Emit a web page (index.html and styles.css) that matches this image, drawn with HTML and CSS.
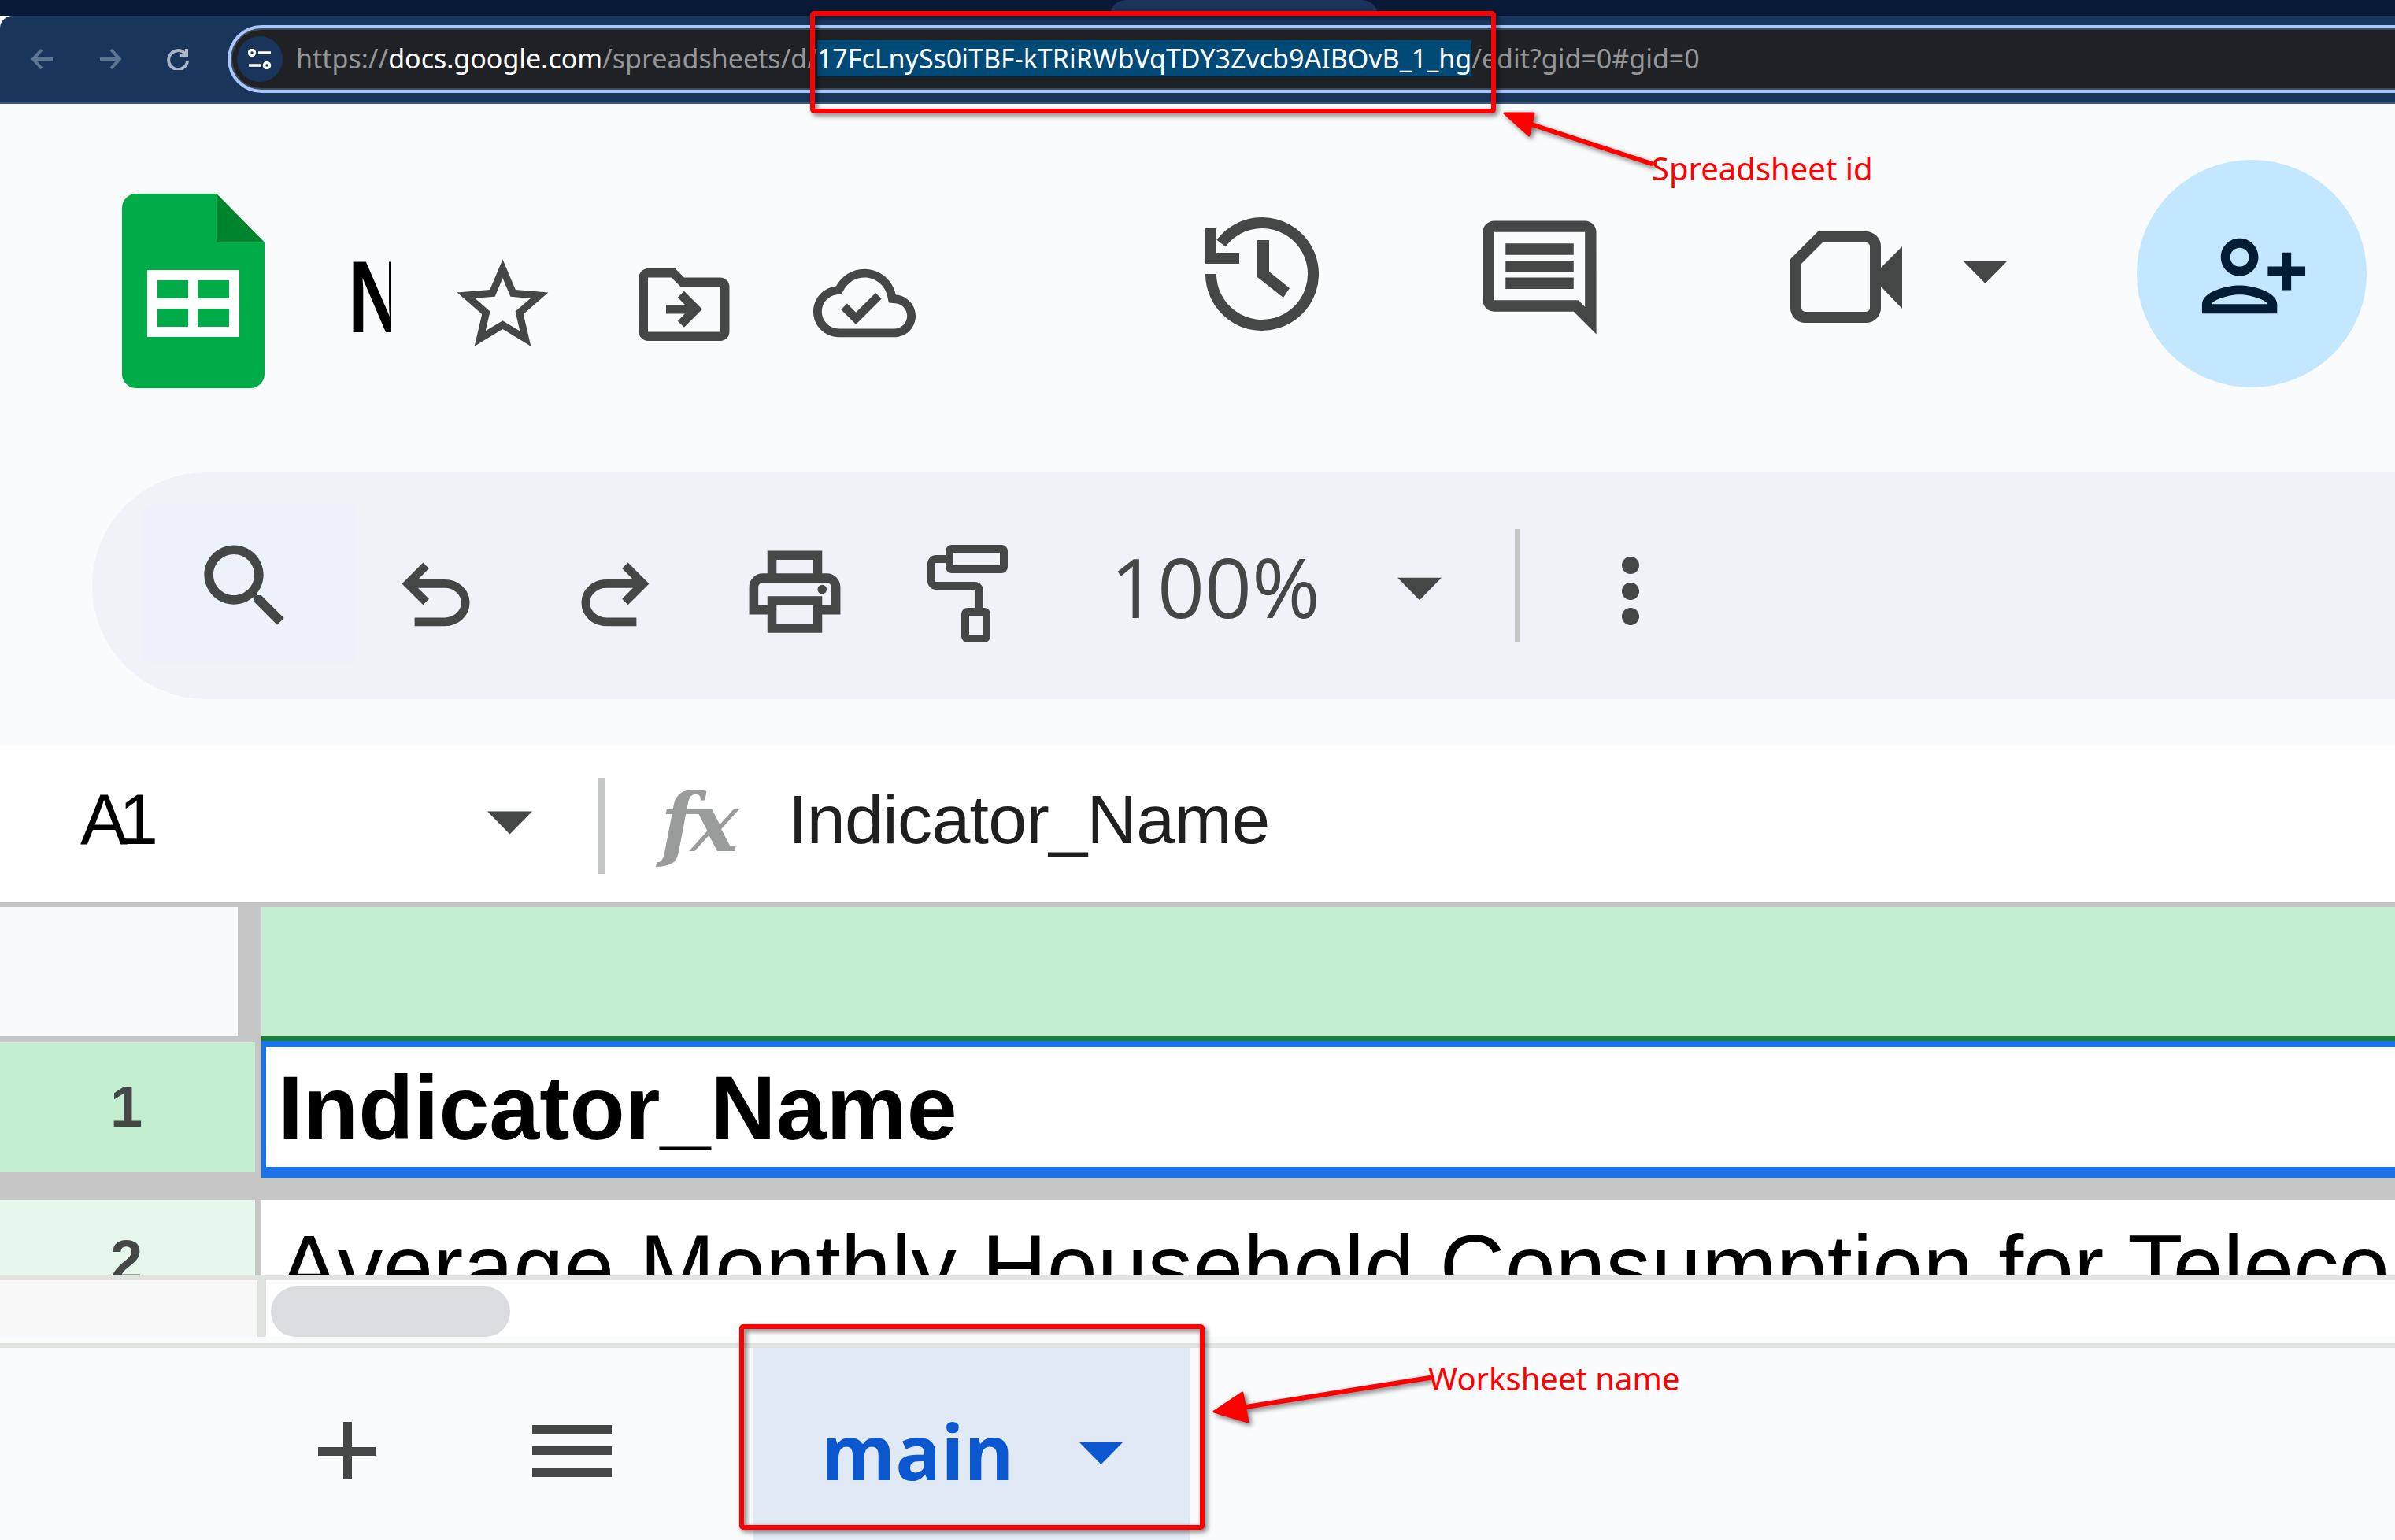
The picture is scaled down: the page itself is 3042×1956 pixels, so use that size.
FILE: index.html
```html
<!DOCTYPE html>
<html>
<head>
    <title>Google Sheets - spreadsheet id and worksheet name</title>
    <link rel="stylesheet" href="styles.css">
</head>
<body>
    <div class="tabstrip">
        <div class="active-tab"></div>
    </div>

    <div class="navbar">
        <svg class="nav-icon back" viewBox="0 0 30 28"><path d="M28 14H4M14 2 3 14l11 12" /></svg>
        <svg class="nav-icon forward" viewBox="0 0 30 28"><path d="M2 14h24M16 2l11 12-11 12" /></svg>
        <svg class="nav-icon reload" viewBox="0 0 32 28"><path d="M27 17a12 12 0 1 1-3-10M26 1v8h-8" /></svg>
        <div class="omnibox">
            <div class="site-info">
                <svg class="tune" viewBox="0 0 30 26"><circle cx="5" cy="5" r="3.5" /><path d="M13 5h16M1 21h16" /><circle cx="24" cy="21" r="3.5" /></svg>
            </div>
            <div class="url"><span class="dim">https://</span><span class="host">docs.google.com</span><span class="dim">/spreadsheets/d/</span><span class="selected">17FcLnySs0iTBF-kTRiRWbVqTDY3Zvcb9AIBOvB_1_hg</span><span class="dim">/edit?gid=0#gid=0</span></div>
            <div class="profile-dot"></div>
        </div>
    </div>

    <div class="doc-header">
        <svg class="logo" viewBox="0 0 181 247">
            <path d="M18 0H120L181 62V229a18 18 0 0 1-18 18H18a18 18 0 0 1-18-18V18A18 18 0 0 1 18 0Z" fill="#00ac47" />
            <path d="M120 0 181 62H120Z" fill="#00832d" />
            <path d="M32 97H149V182H32ZM45 110V133H84V110ZM96 110V133H136V110ZM45 146V169H84V146ZM96 146V169H136V146Z" fill="#fff" fill-rule="evenodd" />
        </svg>
        <div class="doc-title"><span class="doc-title-text">N</span></div>
        <svg class="icon star" viewBox="0 0 24 24"><path d="M22 9.24l-7.19-.62L12 2 9.19 8.63 2 9.24l5.46 4.73L5.82 21 12 17.27 18.18 21l-1.63-7.03L22 9.24zM12 15.4l-3.76 2.27 1-4.28-3.32-2.88 4.38-.38L12 6.1l1.71 4.04 4.38.38-3.32 2.88 1 4.28L12 15.4z" /></svg>
        <svg class="icon folder" viewBox="0 0 24 24"><path d="M20 6h-8l-2-2H4c-1.1 0-1.99.9-1.99 2L2 18c0 1.1.9 2 2 2h16c1.1 0 2-.9 2-2V8c0-1.1-.9-2-2-2zm0 12H4V6h5.17l2 2H20v10zM12.16 12H8v2h4.16l-1.59 1.59L11.99 17 16 13l-4.01-4-1.42 1.41L12.16 12z" /></svg>
        <svg class="icon cloud" viewBox="0 0 24 24"><path d="M19.35 10.04C18.67 6.59 15.64 4 12 4 9.11 4 6.6 5.64 5.35 8.04 2.34 8.36 0 10.91 0 14c0 3.31 2.69 6 6 6h13c2.76 0 5-2.24 5-5 0-2.64-2.05-4.78-4.65-4.96zM19 18H6c-2.21 0-4-1.79-4-4 0-2.05 1.53-3.76 3.56-3.97l1.07-.11.5-.95C8.08 7.14 9.94 6 12 6c2.62 0 4.88 1.86 5.39 4.43l.3 1.5 1.53.11c1.56.1 2.78 1.41 2.78 2.96 0 1.65-1.35 3-3 3zm-9-3.82l-2.09-2.09L6.5 13.5 10 17l6.01-6.01-1.41-1.41z" /></svg>
        <svg class="icon history" viewBox="0 0 144 145">
            <path d="M7 72A65 65 0 1 0 20 33" fill="none" stroke="#444746" stroke-width="14" />
            <path d="M0 14H14V45H43V59H0Z" />
            <path d="M66 29H81V69L107 90 99 102 66 76Z" />
        </svg>
        <svg class="icon comment" viewBox="0 0 24 24"><path d="M21.99 4c0-1.1-.89-2-1.99-2H4c-1.1 0-2 .9-2 2v12c0 1.1.9 2 2 2h14l4 4-.01-18zM20 4v13.17L18.83 16H4V4h16zM6 12h12v2H6zm0-3h12v2H6zm0-3h12v2H6z" /></svg>
        <svg class="icon meet" viewBox="0 0 142 116">
            <path d="M38 7H96A12 12 0 0 1 108 19V97A12 12 0 0 1 96 109H19A12 12 0 0 1 7 97V38Z" fill="none" stroke="#444746" stroke-width="14" />
            <path d="M115 46 142 19V98L115 70Z" />
        </svg>
        <svg class="icon caret meet-caret" viewBox="0 0 55 28"><path d="M0 0H55L27.5 28Z" /></svg>
        <div class="share">
            <svg class="share-icon" viewBox="0 0 24 24"><path d="M15 12c2.21 0 4-1.79 4-4s-1.79-4-4-4-4 1.79-4 4 1.79 4 4 4zm0-6c1.1 0 2 .9 2 2s-.9 2-2 2-2-.9-2-2 .9-2 2-2zm0 8c-2.67 0-8 1.34-8 4v2h16v-2c0-2.66-5.33-4-8-4zm-6 4c.22-.72 3.31-2 6-2 2.7 0 5.8 1.29 6 2H9zm-3-3v-3h3v-2H6V7H4v3H1v2h3v3h2z" /></svg>
        </div>
    </div>

    <div class="toolbar">
        <div class="search-box">
            <svg class="icon search" viewBox="0 0 24 24"><path d="M15.5 14h-.79l-.28-.27C15.41 12.59 16 11.11 16 9.5 16 5.91 13.09 3 9.5 3S3 5.91 3 9.5 5.91 16 9.5 16c1.61 0 3.09-.59 4.23-1.57l.27.28v.79l5 4.99L20.49 19l-4.99-5zm-6 0C7.01 14 5 11.99 5 9.5S7.01 5 9.5 5 14 7.01 14 9.5 11.99 14 9.5 14z" /></svg>
        </div>
        <svg class="icon undo" viewBox="0 -960 960 960"><path d="M280-200v-80h284q63 0 109.5-40T720-420q0-60-46.5-100T564-560H312l104 104-56 56-200-200 200-200 56 56-104 104h252q97 0 166.5 63T800-420q0 94-69.5 157T564-200H280Z" /></svg>
        <svg class="icon redo" viewBox="0 -960 960 960"><path d="M396-200q-97 0-166.5-63T160-420q0-94 69.5-157T396-640h252L544-744l56-56 200 200-200 200-56-56 104-104H396q-63 0-109.5 40T240-420q0 60 46.5 100T396-280h284v80H396Z" /></svg>
        <svg class="icon print" viewBox="0 0 24 24"><path d="M19 8h-1V3H6v5H5c-1.66 0-3 1.34-3 3v6h4v4h12v-4h4v-6c0-1.66-1.34-3-3-3zM8 5h8v3H8V5zm8 12v2H8v-4h8v2zm2-2v-2H6v2H4v-4c0-.55.45-1 1-1h14c.55 0 1 .45 1 1v4h-2z" /><circle cx="18" cy="11.5" r="1" /></svg>
        <svg class="icon roller" viewBox="0 0 102 124">
            <rect x="28" y="5" width="69" height="26" rx="3" fill="none" stroke="#444746" stroke-width="10" />
            <path d="M23 18H11A6 6 0 0 0 5 24V46A6 6 0 0 0 11 52H60A6 6 0 0 1 66 58V80" fill="none" stroke="#444746" stroke-width="10" />
            <rect x="48" y="85" width="27" height="34" rx="3" fill="none" stroke="#444746" stroke-width="10" />
        </svg>
        <div class="zoom-level">100%</div>
        <svg class="icon caret zoom-caret" viewBox="0 0 55 28"><path d="M0 0H55L27.5 28Z" /></svg>
        <div class="divider tool-divider"></div>
        <svg class="icon dots" viewBox="0 0 22 87"><circle cx="11" cy="11" r="11" /><circle cx="11" cy="44" r="11" /><circle cx="11" cy="76" r="11" /></svg>
    </div>

    <div class="formula-bar">
        <div class="name-box">A1</div>
        <svg class="icon caret name-caret" viewBox="0 0 55 28"><path d="M0 0H55L27.5 28Z" /></svg>
        <div class="divider formula-divider"></div>
        <div class="fx">fx</div>
        <div class="formula-text">Indicator_Name</div>
    </div>

    <div class="grid">
        <div class="grid-row header-row">
            <div class="corner"></div>
            <div class="col-head"></div>
        </div>
        <div class="grid-row row-one">
            <div class="row-head active">1</div>
            <div class="cell selected-cell">Indicator_Name</div>
        </div>
        <div class="grid-row row-two">
            <div class="row-head">2</div>
            <div class="cell">Average Monthly Household Consumption for Telecommunications</div>
        </div>
    </div>

    <div class="scroll-row">
        <div class="scroll-side"></div>
        <div class="scroll-track">
            <div class="scroll-thumb"></div>
        </div>
    </div>

    <div class="sheet-bar">
        <svg class="bar-icon add" viewBox="0 0 73 73"><path d="M32 0H43V32H73V43H43V73H32V43H0V32H32Z" /></svg>
        <svg class="bar-icon all-sheets" viewBox="0 0 101 66"><path d="M0 0H101V12H0ZM0 27H101V38H0ZM0 54H101V66H0Z" /></svg>
        <div class="sheet-tab">
            <span class="sheet-name">main</span>
            <svg class="tab-caret" viewBox="0 0 55 28"><path d="M0 0H55L27.5 28Z" /></svg>
        </div>
    </div>

    <!-- annotations drawn on top of the screenshot -->
    <svg class="marks" viewBox="0 0 3042 1956">
        <rect x="1032" y="17" width="865" height="124" rx="2" />
        <path class="line" d="M2098 208 1930 153" />
        <path class="head" d="M1911 144 1948 144 1942 172Z" />
        <rect x="942" y="1685" width="585" height="255" rx="2" />
        <path class="line" d="M1816 1750 1570 1789" />
        <path class="head" d="M1542 1793 1578 1769 1585 1806Z" />
    </svg>
    <div class="note note-id">Spreadsheet id</div>
    <div class="note note-sheet">Worksheet name</div>
</body>
</html>
```

FILE: styles.css
```css
body {
    margin: 0;
    width: 3042px;
    height: 1956px;
    overflow: hidden;
    position: relative;
    background-color: #f9fbfd;
    font-family: 'Liberation Sans', Arial, sans-serif;
}

svg {
    display: block;
    flex: none;
}

/* browser chrome */
.tabstrip {
    height: 20px;
    background-color: #081a35;
    display: flex;
}

.active-tab {
    width: 340px;
    margin-left: 1410px;
    background-color: #1a355c;
    border-radius: 24px 24px 0 0;
}

.navbar {
    height: 110px;
    background-color: #1a355c;
    border-bottom: 2px solid #3d5576;
    border-top-left-radius: 16px;
    display: flex;
    align-items: center;
}

.nav-icon {
    fill: none;
    stroke-width: 4;
    height: 28px;
}

.back {
    width: 30px;
    margin-left: 39px;
    stroke: #5e7592;
}

.forward {
    width: 30px;
    margin-left: 56px;
    stroke: #5e7592;
}

.reload {
    width: 32px;
    margin-left: 56px;
    stroke: #a9b5c6;
}

.omnibox {
    flex: none;
    width: 2800px;
    height: 78px;
    margin-left: 46px;
    margin-top: 20px;
    margin-bottom: 20px;
    border: 4px solid #a8c7fa;
    border-right: none;
    border-radius: 44px 0 0 44px;
    background-color: #202124;
    box-shadow: inset 0 0 0 2px #3c4a5e;
    display: flex;
    align-items: center;
}

.site-info {
    width: 58px;
    height: 58px;
    margin-left: 8px;
    border-radius: 50%;
    background-color: #1a355c;
    display: flex;
    align-items: center;
    justify-content: center;
}

.tune {
    width: 30px;
    height: 26px;
    fill: none;
    stroke: #ffffff;
    stroke-width: 3.5;
}

.url {
    margin-left: 17px;
    margin-bottom: 2px;
    font-family: 'Noto Sans', sans-serif;
    font-size: 34px;
    line-height: 48px;
    white-space: nowrap;
    color: #ffffff;
}

.dim {
    color: #949699;
}

.selected {
    background-color: #004a77;
}

.profile-dot {
    width: 60px;
    height: 60px;
    margin-left: auto;
    margin-right: -47px;
    border-radius: 50%;
    background-color: #1a355c;
}

/* document header */
.doc-header {
    height: 468px;
    display: flex;
    align-items: flex-start;
}

.icon {
    fill: #444746;
}

.logo {
    width: 181px;
    height: 247px;
    margin-left: 155px;
    margin-top: 114px;
}

.doc-title {
    width: 57px;
    height: 130px;
    margin-left: 103px;
    margin-top: 180px;
    overflow: hidden;
    font-weight: bold;
    font-size: 130px;
    line-height: 130px;
    color: #000000;
}

.doc-title-text {
    display: inline-block;
    margin-left: 3px;
    transform: scaleX(0.76);
    transform-origin: left center;
}

.star {
    width: 139px;
    height: 139px;
    margin-left: 72.5px;
    margin-top: 186px;
}

.folder {
    width: 138px;
    height: 138px;
    margin-left: 92px;
    margin-top: 186px;
}

.cloud {
    width: 130px;
    height: 130px;
    margin-left: 95.5px;
    margin-top: 188px;
}

.history {
    width: 144px;
    height: 145px;
    margin-left: 368px;
    margin-top: 144px;
}

.comment {
    width: 173px;
    height: 173px;
    margin-left: 194px;
    margin-top: 134px;
}

.meet {
    width: 142px;
    height: 116px;
    margin-left: 232px;
    margin-top: 162px;
}

.meet-caret {
    width: 55px;
    height: 28px;
    margin-left: 78px;
    margin-top: 200px;
}

.share {
    width: 292px;
    height: 289px;
    margin-left: 165px;
    margin-top: 71px;
    border-radius: 50%;
    background-color: #c2e7ff;
    display: flex;
    align-items: center;
    justify-content: center;
}

.share-icon {
    width: 143px;
    height: 143px;
    margin-top: 6px;
    margin-left: 4px;
    fill: #001d35;
    transform: scaleX(-1);
}

/* toolbar */
.toolbar {
    height: 288px;
    margin-left: 117px;
    border-radius: 144px 0 0 144px;
    background-color: #eff3f8;
    display: flex;
    align-items: flex-start;
}

.search-box {
    width: 273px;
    height: 201px;
    margin-left: 62px;
    margin-top: 42px;
    border-radius: 14px 0 0 14px;
    background-color: #edf2fa;
}

.search {
    width: 139px;
    height: 139px;
    margin-left: 62.6px;
    margin-top: 33px;
}

.undo {
    width: 129px;
    height: 129px;
    margin-left: 36.5px;
    margin-top: 92.5px;
}

.redo {
    width: 129px;
    height: 129px;
    margin-left: 99px;
    margin-top: 92.5px;
}

.print {
    width: 139px;
    height: 139px;
    margin-left: 94.5px;
    margin-top: 82px;
}

.roller {
    width: 102px;
    height: 124px;
    margin-left: 99px;
    margin-top: 92px;
}

.zoom-level {
    width: 266px;
    margin-left: 130px;
    margin-top: 90px;
    font-family: 'Open Sans', sans-serif;
    font-weight: 500;
    font-size: 105px;
    line-height: 110px;
    color: #444746;
}

.zoom-caret {
    width: 56px;
    height: 30px;
    margin-left: 99px;
    margin-top: 133px;
}

.divider {
    flex: none;
    background-color: #c4c7c5;
}

.tool-divider {
    width: 6px;
    height: 144px;
    margin-left: 93px;
    margin-top: 72px;
}

.dots {
    width: 22px;
    height: 87px;
    margin-left: 130px;
    margin-top: 107px;
}

/* formula bar */
.formula-bar {
    height: 200px;
    margin-top: 58px;
    background-color: #ffffff;
    display: flex;
    align-items: flex-start;
}

.name-box {
    width: 300px;
    margin-left: 102px;
    margin-top: 45px;
    font-size: 90px;
    line-height: 100px;
    letter-spacing: -11px;
    color: #000000;
}

.name-caret {
    width: 57px;
    height: 30px;
    margin-left: 217px;
    margin-top: 84px;
}

.formula-divider {
    width: 8px;
    height: 122px;
    margin-left: 84px;
    margin-top: 42px;
}

.fx {
    width: 160px;
    margin-left: 71px;
    margin-top: 34px;
    font-family: 'DejaVu Serif', serif;
    font-weight: bold;
    font-style: italic;
    font-size: 102px;
    line-height: 130px;
    letter-spacing: -6px;
    color: #9a9c9b;
}

.formula-text {
    margin-left: 2px;
    margin-top: 45px;
    font-size: 88px;
    line-height: 100px;
    letter-spacing: -0.7px;
    white-space: nowrap;
    color: #1f1f1f;
}

/* grid */
.grid {
    padding-top: 6px;
    background-color: #c6c6c6;
    overflow: hidden;
}

.grid-row {
    display: flex;
    align-items: flex-start;
}

.header-row {
    height: 170px;
}

.corner {
    width: 302px;
    height: 164px;
    background-color: #f8f9fb;
}

.col-head {
    flex: 1;
    height: 164px;
    margin-left: 30px;
    background-color: #c4eed0;
    border-bottom: 6px solid #188038;
}

.row-head {
    flex: none;
    width: 324px;
    box-sizing: border-box;
    padding-left: 140px;
    font-weight: bold;
    font-size: 74px;
    color: #444746;
}

.row-head.active {
    height: 164px;
    margin-top: 2px;
    line-height: 164px;
    background-color: #c4eed0;
}

.row-one {
    height: 202px;
}

.row-two {
    height: 96px;
    background-color: #c6c6c6;
    overflow: hidden;
}

.row-two .row-head {
    height: 96px;
    padding-top: 41px;
    line-height: 74px;
    background-color: #e6f8ee;
}

.cell {
    flex: 1;
    height: 96px;
    margin-left: 8px;
    padding-left: 22px;
    padding-top: 20px;
    box-sizing: border-box;
    overflow: hidden;
    white-space: nowrap;
    background-color: #ffffff;
    font-size: 115px;
    line-height: 130px;
    color: #000000;
}

.selected-cell {
    height: 174px;
    padding-left: 15px;
    padding-top: 12px;
    border: solid #1a73e8;
    border-width: 8px 0 14px 6px;
    font-weight: bold;
}

/* scrollbar row */
.scroll-row {
    height: 72px;
    margin-bottom: 8px;
    border-top: 6px solid #e1e3e1;
    background-color: #ffffff;
    display: flex;
}

.scroll-side {
    width: 327px;
    background-color: #f8f8f8;
    border-right: 11px solid #e1e3e1;
}

.scroll-track {
    flex: 1;
    padding-top: 8px;
    padding-left: 6px;
}

.scroll-thumb {
    width: 304px;
    height: 64px;
    border-radius: 32px;
    background-color: #dadce0;
}

/* sheet tabs */
.sheet-bar {
    height: 244px;
    border-top: 6px solid #e1e3e1;
    display: flex;
    align-items: flex-start;
}

.bar-icon {
    fill: #444746;
}

.add {
    width: 73px;
    height: 73px;
    margin-left: 404px;
    margin-top: 94px;
}

.all-sheets {
    width: 101px;
    height: 66px;
    margin-left: 199px;
    margin-top: 98px;
}

.sheet-tab {
    width: 554px;
    height: 244px;
    margin-left: 180px;
    background-color: #e1e9f5;
    display: flex;
    align-items: flex-start;
}

.sheet-name {
    width: 300px;
    margin-left: 86px;
    margin-top: 71px;
    font-family: 'Open Sans', sans-serif;
    font-weight: 700;
    font-size: 96px;
    line-height: 120px;
    color: #0b57d0;
}

.tab-caret {
    width: 57px;
    height: 28px;
    margin-left: 27px;
    margin-top: 120px;
    fill: #0b57d0;
}

/* annotations */
.marks {
    position: absolute;
    left: 0;
    top: 0;
    width: 3042px;
    height: 1956px;
    filter: drop-shadow(3px 3px 3px rgba(0, 0, 0, 0.55));
}

.marks rect {
    fill: none;
    stroke: #ff0000;
    stroke-width: 6;
}

.marks .line {
    fill: none;
    stroke: #ff0000;
    stroke-width: 6;
    stroke-linecap: round;
}

.marks .head {
    fill: #ff0000;
    stroke: #ff0000;
    stroke-width: 3;
    stroke-linejoin: round;
}

.note {
    position: absolute;
    font-family: 'Noto Sans', sans-serif;
    font-size: 40px;
    line-height: 54px;
    white-space: nowrap;
    color: #ff0000;
}

.note-id {
    left: 2098px;
    top: 187px;
}

.note-sheet {
    left: 1814px;
    top: 1724px;
}
```
